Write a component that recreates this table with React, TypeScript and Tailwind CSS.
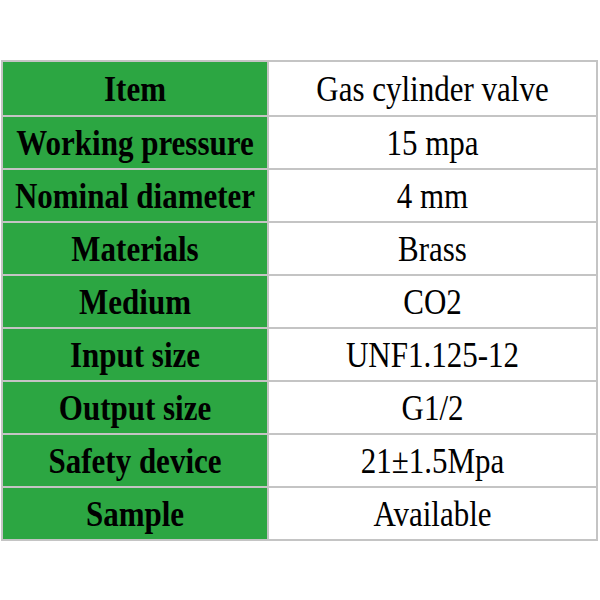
const rows: [string, string][] = [
  ['Item', 'Gas cylinder valve'],
  ['Working pressure', '15 mpa'],
  ['Nominal diameter', '4 mm'],
  ['Materials', 'Brass'],
  ['Medium', 'CO2'],
  ['Input size', 'UNF1.125-12'],
  ['Output size', 'G1/2'],
  ['Safety device', '21±1.5Mpa'],
  ['Sample', 'Available'],
];

export default function App() {
  return (
    <div className="w-[600px] h-[600px] bg-white pt-[60px] pl-[1px] pr-[2px] font-['Liberation_Serif','Times_New_Roman',serif]">
      <div className="border-2 border-[#c4c4c4]">
        {rows.map(([k, v], i) => (
          <div key={k} className={`grid grid-cols-[266px_1fr] h-[53px] ${i > 0 ? 'border-t-2 border-[#c4c4c4]' : ''}`}>
            <div className="bg-[#2ca642] border-r-2 border-[#c4c4c4] flex items-center justify-center text-[31px] font-bold text-black leading-none">
              <span className="inline-block scale-y-[1.13] translate-y-[1px]">{k}</span>
            </div>
            <div className="flex items-center justify-center text-[31px] text-black leading-none">
              <span className="inline-block scale-y-[1.13] translate-y-[1px]">{v}</span>
            </div>
          </div>
        ))}
      </div>
    </div>
  );
}
